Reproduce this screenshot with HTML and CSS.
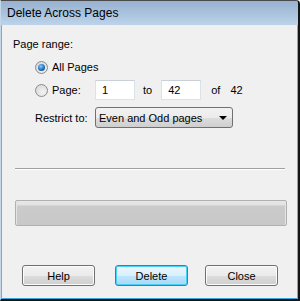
FILE: index.html
```html
<!DOCTYPE html>
<html lang="en">
<head>
    <meta charset="UTF-8">
    <title>Delete Across Pages</title>
    <link rel="stylesheet" href="styles.css">
</head>
<body>
    <div class="window">
        <div class="title-bar">Delete Across Pages</div>

        <div class="content">
            <!-- Page range -->
            <div class="label">Page range:</div>

            <div class="row row-all">
                <div class="opt">
                    <span class="radio checked"></span>
                    <span>All Pages</span>
                </div>
            </div>

            <div class="row row-page">
                <div class="opt">
                    <span class="radio"></span>
                    <span>Page:</span>
                </div>
                <div class="field">1</div>
                <span class="to">to</span>
                <div class="field">42</div>
                <span class="of">of</span>
                <span class="total">42</span>
            </div>

            <div class="row row-restrict">
                <div class="opt">Restrict to:</div>
                <div class="select">
                    <span>Even and Odd pages</span>
                    <span class="arrow"></span>
                </div>
            </div>

            <div class="separator"></div>

            <div class="progress"></div>

            <!-- Buttons -->
            <div class="buttons">
                <button class="btn">Help</button>
                <button class="btn default">Delete</button>
                <button class="btn">Close</button>
            </div>
        </div>
    </div>
</body>
</html>
```

FILE: styles.css
```css
body {
    margin: 0;
    font-family: "Liberation Sans", Arial, sans-serif;
    font-size: 11px;
    color: #000;
    background: #fff;
}
.window {
    width: 300px;
    height: 301px;
    box-sizing: border-box;
    background-color: #f0f0f0;
    border-top: 1px solid #4a4a4a;
    border-left: 1px solid #c4d6e8;
    border-right: 2px solid #151515;
    border-bottom: 2px solid #151515;
    border-top-right-radius: 4px;
    box-shadow: inset 1px 0 #5eb6e4, inset -1px 0 #3cc4f0, inset 0 -1px #3aa8e0;
    display: flex;
    flex-direction: column;
    overflow: hidden;
}
.title-bar {
    height: 24px;
    line-height: 24px;
    padding-left: 6px;
    font-size: 12px;
    background: linear-gradient(#97b1cf, #bcd3ea);
    flex-shrink: 0;
}
.content {
    padding: 12px 0 0 12px;
    display: flex;
    flex-direction: column;
}
.label {
    height: 14px;
    line-height: 14px;
}
.row {
    display: flex;
    align-items: center;
    padding-left: 22px;
    white-space: nowrap;
}
.row-all {
    margin-top: 8px;
    height: 16px;
}
.row-page {
    margin-top: 5px;
    height: 20px;
}
.row-restrict {
    margin-top: 7px;
    height: 21px;
}
.opt {
    width: 60px;
    flex-shrink: 0;
    display: flex;
    align-items: center;
    gap: 4px;
}
.radio {
    width: 11px;
    height: 11px;
    border-radius: 50%;
    border: 1px solid #8c8c8c;
    background: radial-gradient(circle at 60% 65%, #f4f4f4 0, #dcdcdc 70%);
    position: relative;
    flex-shrink: 0;
}
.radio.checked::after {
    content: "";
    position: absolute;
    left: 2px;
    top: 2px;
    width: 7px;
    height: 7px;
    border-radius: 50%;
    background: radial-gradient(circle at 40% 35%, #8fd0f8 0, #1c6fbf 55%, #0e3f7c 100%);
}
.field {
    width: 32px;
    height: 18px;
    line-height: 18px;
    padding-left: 6px;
    background-color: #fff;
    border: 1px solid #dde2e8;
    border-top-color: #c9d0d8;
}
.to {
    margin: 0 9px 0 8px;
}
.of {
    margin-left: 10px;
}
.total {
    margin-left: 10px;
}
.select {
    width: 128px;
    height: 19px;
    border: 1px solid #707070;
    border-radius: 3px;
    background: linear-gradient(#f2f2f2 0, #ebebeb 50%, #dddddd 51%, #cfcfcf 100%);
    display: flex;
    align-items: center;
    justify-content: space-between;
    padding: 0 5px 0 3px;
    box-sizing: content-box;
}
.arrow {
    width: 0;
    height: 0;
    border-left: 4px solid transparent;
    border-right: 4px solid transparent;
    border-top: 4px solid #000;
}
.separator {
    margin-top: 40px;
    width: 270px;
    height: 1px;
    margin-left: 2px;
    background-color: #a0a0a0;
    border-bottom: 1px solid #fff;
}
.progress {
    margin-top: 30px;
    margin-left: 2px;
    width: 270px;
    height: 24px;
    border: 1px solid #b0b0b0;
    border-radius: 2px;
    background: linear-gradient(#e8e8e8 0, #e2e2e2 4px, #cbcbcb 5px, #c8c8c8 100%);
    box-shadow: inset 1px 0 #e4e4e4, inset -1px 0 #e4e4e4;
}
.buttons {
    margin-top: 39px;
    display: flex;
    padding-left: 9px;
    gap: 20px;
}
.btn {
    width: 73px;
    height: 21px;
    padding: 0;
    font-family: "Liberation Sans", Arial, sans-serif;
    font-size: 11px;
    color: #000;
    border: 1px solid #707070;
    border-radius: 3px;
    background: linear-gradient(#f2f2f2 0, #ebebeb 50%, #dddddd 51%, #cfcfcf 100%);
    box-shadow: inset 0 0 0 1px #fcfcfc;
}
.btn.default {
    border-color: #3c7fb1;
    background: linear-gradient(#eaf6fd 0, #d9f0fc 50%, #bee6fd 51%, #a7d9f5 100%);
    box-shadow: inset 0 0 0 1px #48d0f8;
}
.buttons .btn:last-child {
    margin-left: -3px;
}
```
